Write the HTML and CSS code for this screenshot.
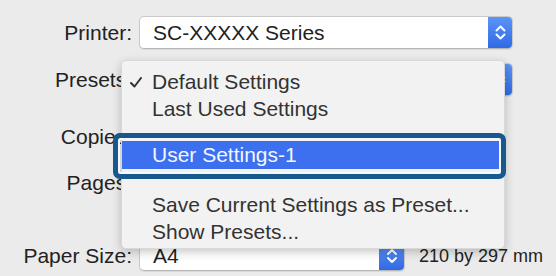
FILE: index.html
```html
<!DOCTYPE html>
<html>
<head>
<meta charset="utf-8">
<link rel="stylesheet" href="styles.css">
</head>
<body>
<div class="dialog">
  <div class="row row-printer">
    <span class="label">Printer:</span>
    <div class="popup popup-wide">
      <span class="popup-text">SC-XXXXX Series</span>
      <span class="stepper"><svg width="25" height="33" viewBox="0 0 25 33"><path d="M8.5 14.5 L12.5 10.5 L16.5 14.5" fill="none" stroke="#fff" stroke-width="2" stroke-linecap="round" stroke-linejoin="round"/><path d="M8.5 18.5 L12.5 22.5 L16.5 18.5" fill="none" stroke="#fff" stroke-width="2" stroke-linecap="round" stroke-linejoin="round"/></svg></span>
    </div>
  </div>
  <div class="row row-presets">
    <span class="label">Presets:</span>
    <div class="popup popup-wide">
      <span class="popup-text"></span>
      <span class="stepper"><svg width="25" height="33" viewBox="0 0 25 33"><path d="M8.5 14.5 L12.5 10.5 L16.5 14.5" fill="none" stroke="#fff" stroke-width="2" stroke-linecap="round" stroke-linejoin="round"/><path d="M8.5 18.5 L12.5 22.5 L16.5 18.5" fill="none" stroke="#fff" stroke-width="2" stroke-linecap="round" stroke-linejoin="round"/></svg></span>
    </div>
  </div>
  <div class="row row-copies">
    <span class="label">Copies:</span>
  </div>
  <div class="row row-pages">
    <span class="label">Pages:</span>
  </div>
  <div class="row row-paper">
    <span class="label">Paper Size:</span>
    <div class="popup popup-paper">
      <span class="popup-text">A4</span>
      <span class="stepper"><svg width="26" height="30" viewBox="0 0 26 30"><path d="M9 13 L13 9 L17 13" fill="none" stroke="#fff" stroke-width="2" stroke-linecap="round" stroke-linejoin="round"/><path d="M9 17 L13 21 L17 17" fill="none" stroke="#fff" stroke-width="2" stroke-linecap="round" stroke-linejoin="round"/></svg></span>
    </div>
    <span class="dims">210 by 297 mm</span>
  </div>

  <div class="menu">
    <div class="item"><svg class="check" width="12" height="11" viewBox="0 0 12 11"><path d="M1 6 L4.5 9.5 L11 1" fill="none" stroke="#333" stroke-width="2" stroke-linecap="round" stroke-linejoin="round"/></svg>Default Settings</div>
    <div class="item">Last Used Settings</div>
    <div class="sep sep-1"></div>
    <div class="item item-selected">User Settings-1<span class="callout"></span></div>
    <div class="sep sep-2"></div>
    <div class="item">Save Current Settings as Preset...</div>
    <div class="item">Show Presets...</div>
  </div>
</div>
</body>
</html>
```

FILE: styles.css
```css
html, body {
  margin: 0;
  padding: 0;
}
body {
  width: 556px;
  height: 276px;
  overflow: hidden;
  background: #ebebeb;
  font-family: "Liberation Sans", Arial, sans-serif;
  font-size: 21px;
  color: #222;
}
.dialog {
  position: relative;
  width: 556px;
  height: 276px;
}
.row {
  display: flex;
  align-items: center;
  gap: 7px;
  height: 33px;
}
.row-printer { padding-top: 16px; }
.row-presets { margin-top: 14px; }
.row-copies { margin-top: 24px; }
.row-pages { margin-top: 13px; }
.row-paper { margin-top: 42px; height: 30px; }
.label {
  width: 132px;
  text-align: right;
  white-space: nowrap;
  flex: none;
}
.popup {
  flex: none;
  box-sizing: border-box;
  height: 33px;
  display: flex;
  align-items: center;
  background: #fff;
  border: 1px solid #c9c9c9;
  border-bottom-color: #b5b5b5;
  border-radius: 5px;
  box-shadow: 0 1px 1px rgba(0,0,0,0.08);
  overflow: hidden;
}
.popup-wide { width: 374px; }
.popup-paper { width: 266px; height: 30px; }
.popup-text {
  flex: 1;
  padding-left: 13px;
  color: #222;
  white-space: nowrap;
}
.stepper {
  flex: none;
  display: flex;
  align-self: stretch;
  margin: -1px -1px -1px 0;
  background: linear-gradient(#5d95f6, #2f69e4);
  border-radius: 0 5px 5px 0;
}
.dims {
  flex: none;
  margin-left: 7px;
  font-size: 18px;
  color: #222;
  white-space: nowrap;
}
.menu {
  position: absolute;
  left: 121px;
  top: 60px;
  width: 384px;
  box-sizing: border-box;
  padding: 7px 0 3px;
  background: #f2f2f2;
  border: 1px solid rgba(0,0,0,0.1);
  border-radius: 5px;
  box-shadow: 0 3px 10px rgba(0,0,0,0.22);
  color: #333;
}
.item {
  position: relative;
  height: 27px;
  line-height: 27px;
  padding-left: 30px;
  white-space: nowrap;
}
.check {
  position: absolute;
  left: 8px;
  top: 9px;
}
.sep-1 { height: 19px; }
.sep-2 { height: 22px; }
.item-selected {
  height: 28px;
  line-height: 28px;
  background: #3c70ee;
  color: #f4f6ff;
}
.callout {
  position: absolute;
  left: -9px;
  right: -2px;
  top: -8px;
  bottom: -10px;
  border: 5px solid #17598f;
  border-radius: 7px;
  box-shadow: inset 0 0 0 2px #f4f8fc;
}
```
